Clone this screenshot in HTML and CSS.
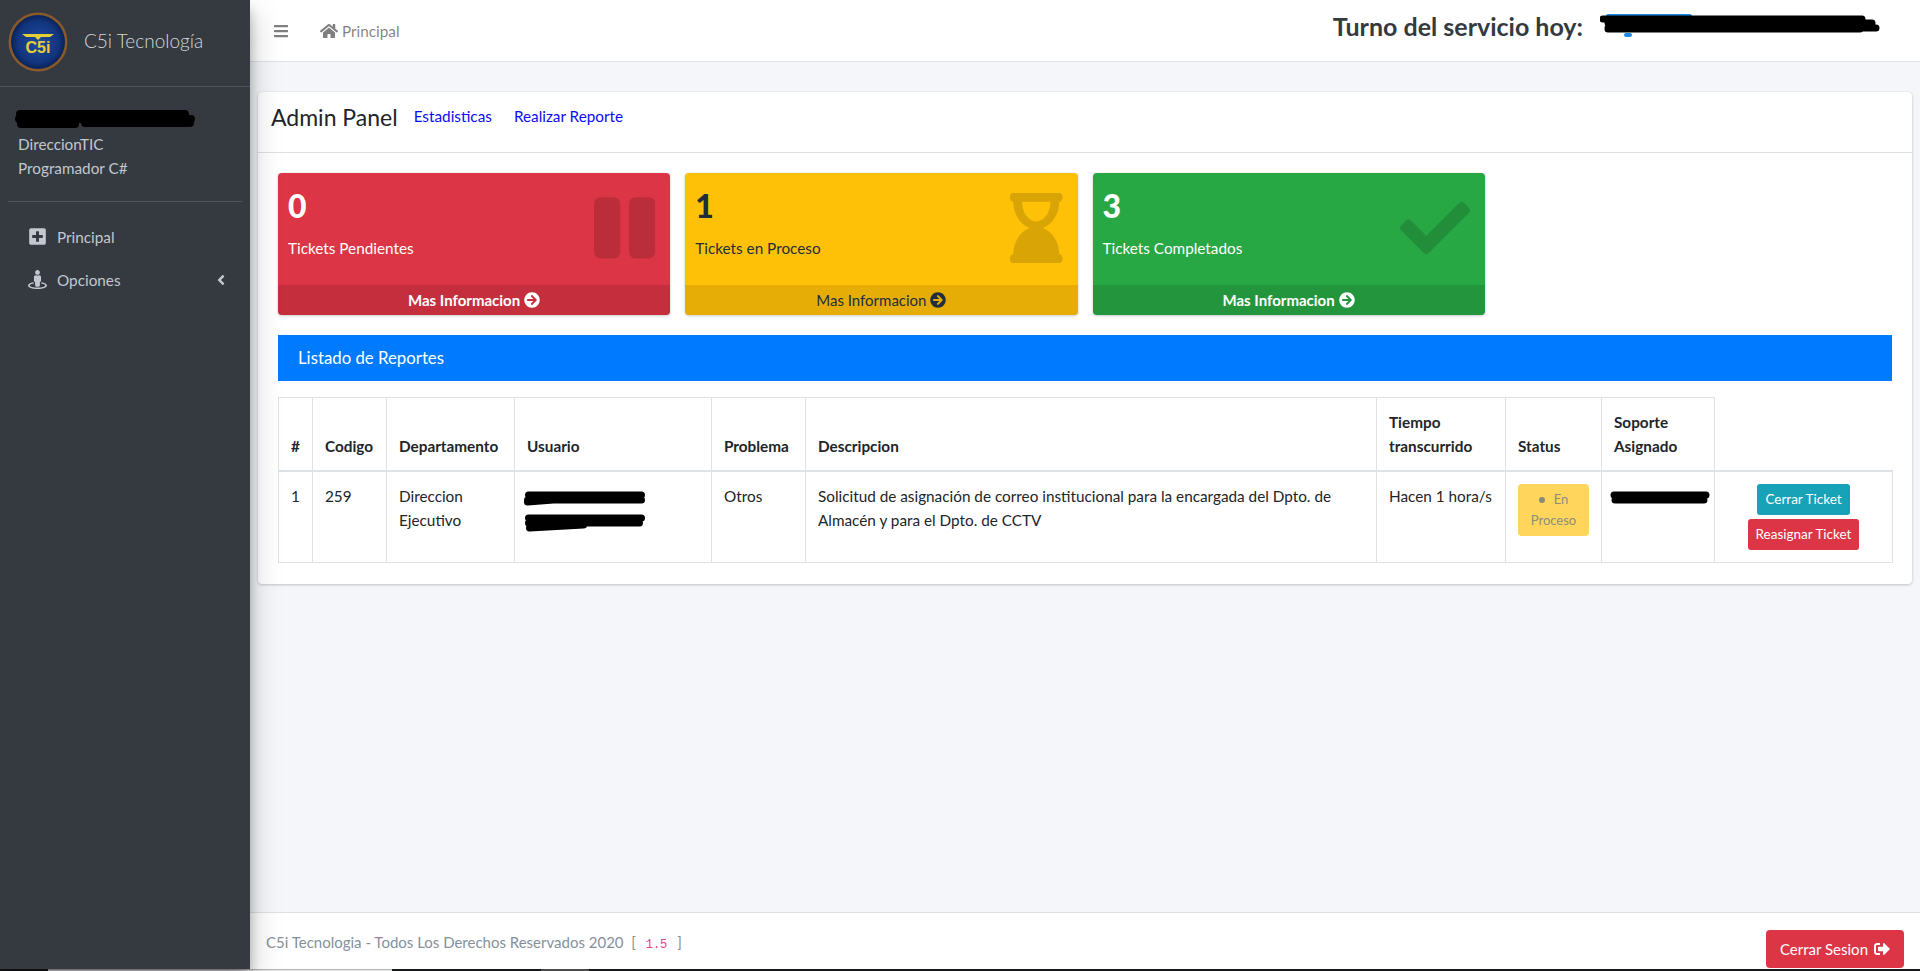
FILE: index.html
```html
<!DOCTYPE html>
<html lang="es">

<head>
    <meta charset="utf-8">
    <title>C5i Tecnologia</title>
    <link rel="stylesheet" href="styles.css">
</head>

<body>
    <div class="wrapper">
        <!-- Sidebar -->
        <aside class="sidebar">
            <div class="brand">
                <svg class="brand-logo" viewBox="0 0 60 60">
                    <defs>
                        <radialGradient id="logo-fill">
                            <stop offset="0" stop-color="#1f4a9c" />
                            <stop offset="0.75" stop-color="#123680" />
                            <stop offset="1" stop-color="#0a2357" />
                        </radialGradient>
                    </defs>
                    <circle cx="30" cy="30" r="29.5" fill="#8a5a2a" />
                    <circle cx="30" cy="30" r="27" fill="url(#logo-fill)" />
                    <path d="M14 22h32l-4 3H33l-3 3-3-3H18z" fill="#e6cf35" />
                    <text x="30" y="41" text-anchor="middle" class="brand-logo-text">C5i</text>
                </svg>
                <span class="brand-text">C5i Tecnología</span>
            </div>
            <div class="user-panel">
                <svg class="scribble user-scribble" viewBox="0 0 181 22">
                    <path d="M5 6 H170 M4 11 H176 M6 16 H60 M70 15 H175" />
                </svg>
                <div>DireccionTIC</div>
                <div>Programador C#</div>
            </div>
            <nav class="side-nav">
                <a class="side-link">
                    <svg class="side-icon" viewBox="0 0 448 512"><path d="M400 32H48C21.5 32 0 53.5 0 80v352c0 26.5 21.5 48 48 48h352c26.5 0 48-21.5 48-48V80c0-26.5-21.5-48-48-48zm-32 252c0 6.6-5.4 12-12 12h-92v92c0 6.6-5.4 12-12 12h-56c-6.6 0-12-5.4-12-12v-92H92c-6.6 0-12-5.4-12-12v-56c0-6.6 5.4-12 12-12h92v-92c0-6.6 5.4-12 12-12h56c6.6 0 12 5.4 12 12v92h92c6.6 0 12 5.4 12 12v56z" /></svg>
                    Principal
                </a>
                <a class="side-link">
                    <svg class="side-icon" viewBox="0 0 512 512"><path d="M367.9 329.76c-4.62 5.3-9.78 10.1-15.9 13.65v22.94c66.52 9.34 112 28.05 112 49.65 0 30.93-93.12 56-208 56S48 446.93 48 416c0-21.6 45.48-40.3 112-49.65v-22.94c-6.12-3.55-11.28-8.35-15.9-13.65C58.87 345.34 0 378.05 0 416c0 53.02 114.62 96 256 96s256-42.98 256-96c0-37.95-58.87-70.66-144.1-86.24zM256 128c35.35 0 64-28.65 64-64S291.35 0 256 0s-64 28.65-64 64 28.65 64 64 64zm-64 192v96c0 17.67 14.33 32 32 32h64c17.67 0 32-14.33 32-32v-96c17.67 0 32-14.33 32-32v-96c0-26.51-21.49-48-48-48h-11.8c-11.07 5.03-23.26 8-36.2 8s-25.13-2.97-36.2-8H208c-26.51 0-48 21.49-48 48v96c0 17.67 14.33 32 32 32z" /></svg>
                    Opciones
                    <svg class="side-chevron" viewBox="0 0 256 512"><path d="M31.7 239l136-136c9.4-9.4 24.6-9.4 33.9 0l22.6 22.6c9.4 9.4 9.4 24.6 0 33.9L127.9 256l96.4 96.4c9.4 9.4 9.4 24.6 0 33.9L201.7 409c-9.4 9.4-24.6 9.4-33.9 0l-136-136c-9.5-9.4-9.5-24.6-.1-34z" /></svg>
                </a>
            </nav>
        </aside>

        <div class="main">
            <!-- Top navbar -->
            <header class="navbar">
                <svg class="nav-bars" viewBox="0 0 448 512"><path d="M16 132h416c8.837 0 16-7.163 16-16V76c0-8.837-7.163-16-16-16H16C7.163 60 0 67.163 0 76v40c0 8.837 7.163 16 16 16zm0 160h416c8.837 0 16-7.163 16-16v-40c0-8.837-7.163-16-16-16H16c-8.837 0-16 7.163-16 16v40c0 8.837 7.163 16 16 16zm0 160h416c8.837 0 16-7.163 16-16v-40c0-8.837-7.163-16-16-16H16c-8.837 0-16 7.163-16 16v40c0 8.837 7.163 16 16 16z" /></svg>
                <a class="nav-home">
                    <svg class="nav-home-icon" viewBox="0 0 576 512"><path d="M280.37 148.26L96 300.11V464a16 16 0 0 0 16 16l112.06-.29a16 16 0 0 0 15.92-16V368a16 16 0 0 1 16-16h64a16 16 0 0 1 16 16v95.64a16 16 0 0 0 16 16.05L464 480a16 16 0 0 0 16-16V300L295.67 148.26a12.19 12.19 0 0 0-15.3 0zM571.6 251.47L488 182.56V44.05a12 12 0 0 0-12-12h-56a12 12 0 0 0-12 12v72.61L318.47 43a48 48 0 0 0-61 0L4.34 251.47a12 12 0 0 0-1.6 16.9l25.5 31A12 12 0 0 0 45.15 301l235.22-193.74a12.19 12.19 0 0 1 15.3 0L530.9 301a12 12 0 0 0 16.9-1.6l25.5-31a12 12 0 0 0-1.7-16.93z" /></svg>
                    Principal
                </a>
                <div class="duty">
                    <span class="duty-label">Turno del servicio hoy:</span>
                    <span class="duty-name">
                        <svg class="scribble" viewBox="0 0 280 24">
                            <path class="name-peek" d="M8 2 H90 M26 21 H30" />
                            <path d="M3 5 H262 M8 9 H272 M8 14 H276 M8 15 H260" />
                        </svg>
                    </span>
                </div>
            </header>

            <!-- Content -->
            <main class="content">
                <section class="card">
                    <div class="card-header">
                        <h1 class="card-title">Admin Panel</h1>
                        <a class="card-link">Estadisticas</a>
                        <a class="card-link">Realizar Reporte</a>
                    </div>
                    <div class="card-body">
                        <div class="boxes">
                            <div class="small-box box-red">
                                <div class="box-inner">
                                    <h3>0</h3>
                                    <p>Tickets Pendientes</p>
                                </div>
                                <svg class="box-icon" viewBox="0 0 448 512"><path d="M144 479H48c-26.5 0-48-21.5-48-48V79c0-26.5 21.5-48 48-48h96c26.5 0 48 21.5 48 48v352c0 26.5-21.5 48-48 48zm304-48V79c0-26.5-21.5-48-48-48h-96c-26.5 0-48 21.5-48 48v352c0 26.5 21.5 48 48 48h96c26.5 0 48-21.5 48-48z" /></svg>
                                <a class="box-footer">Mas Informacion
                                    <svg class="arrow-icon" viewBox="0 0 512 512"><path d="M256 8c137 0 248 111 248 248S393 504 256 504 8 393 8 256 119 8 256 8zm-28.9 143.6l75.5 72.4H120c-13.3 0-24 10.7-24 24v16c0 13.3 10.7 24 24 24h182.6l-75.5 72.4c-9.7 9.3-9.9 24.8-.4 34.3l11 10.9c9.4 9.4 24.6 9.4 33.9 0L404.3 273c9.4-9.4 9.4-24.6 0-33.9L271.6 106.3c-9.4-9.4-24.6-9.4-33.9 0l-11 10.9c-9.5 9.6-9.3 25.1.4 34.4z" /></svg>
                                </a>
                            </div>
                            <div class="small-box box-yellow">
                                <div class="box-inner">
                                    <h3>1</h3>
                                    <p>Tickets en Proceso</p>
                                </div>
                                <svg class="box-icon" viewBox="0 0 384 512"><path d="M360 64c13.255 0 24-10.745 24-24V24c0-13.255-10.745-24-24-24H24C10.745 0 0 10.745 0 24v16c0 13.255 10.745 24 24 24 0 90.965 51.016 167.734 120.842 192C75.016 280.266 24 357.035 24 448c-13.255 0-24 10.745-24 24v16c0 13.255 10.745 24 24 24h336c13.255 0 24-10.745 24-24v-16c0-13.255-10.745-24-24-24 0-90.965-51.016-167.734-120.842-192C308.984 231.734 360 154.965 360 64zM192 208c-57.787 0-104-66.518-104-144h208c0 77.945-46.51 144-104 144z" /></svg>
                                <a class="box-footer">Mas Informacion
                                    <svg class="arrow-icon" viewBox="0 0 512 512"><path d="M256 8c137 0 248 111 248 248S393 504 256 504 8 393 8 256 119 8 256 8zm-28.9 143.6l75.5 72.4H120c-13.3 0-24 10.7-24 24v16c0 13.3 10.7 24 24 24h182.6l-75.5 72.4c-9.7 9.3-9.9 24.8-.4 34.3l11 10.9c9.4 9.4 24.6 9.4 33.9 0L404.3 273c9.4-9.4 9.4-24.6 0-33.9L271.6 106.3c-9.4-9.4-24.6-9.4-33.9 0l-11 10.9c-9.5 9.6-9.3 25.1.4 34.4z" /></svg>
                                </a>
                            </div>
                            <div class="small-box box-green">
                                <div class="box-inner">
                                    <h3>3</h3>
                                    <p>Tickets Completados</p>
                                </div>
                                <svg class="box-icon" viewBox="0 0 512 512"><path d="M173.898 439.404l-166.4-166.4c-9.997-9.997-9.997-26.206 0-36.204l36.203-36.204c9.997-9.998 26.207-9.998 36.204 0L192 312.69 432.095 72.596c9.997-9.997 26.207-9.997 36.204 0l36.203 36.204c9.997 9.997 9.997 26.206 0 36.204l-294.4 294.401c-9.998 9.997-26.207 9.997-36.204-.001z" /></svg>
                                <a class="box-footer">Mas Informacion
                                    <svg class="arrow-icon" viewBox="0 0 512 512"><path d="M256 8c137 0 248 111 248 248S393 504 256 504 8 393 8 256 119 8 256 8zm-28.9 143.6l75.5 72.4H120c-13.3 0-24 10.7-24 24v16c0 13.3 10.7 24 24 24h182.6l-75.5 72.4c-9.7 9.3-9.9 24.8-.4 34.3l11 10.9c9.4 9.4 24.6 9.4 33.9 0L404.3 273c9.4-9.4 9.4-24.6 0-33.9L271.6 106.3c-9.4-9.4-24.6-9.4-33.9 0l-11 10.9c-9.5 9.6-9.3 25.1.4 34.4z" /></svg>
                                </a>
                            </div>
                        </div>

                        <div class="list-title">Listado de Reportes</div>

                        <table class="reports">
                            <colgroup>
                                <col class="col-num">
                                <col class="col-code">
                                <col class="col-dept">
                                <col class="col-user">
                                <col class="col-problem">
                                <col class="col-desc">
                                <col class="col-time">
                                <col class="col-status">
                                <col class="col-support">
                                <col class="col-actions">
                            </colgroup>
                            <thead>
                                <tr>
                                    <th>#</th>
                                    <th>Codigo</th>
                                    <th>Departamento</th>
                                    <th>Usuario</th>
                                    <th>Problema</th>
                                    <th>Descripcion</th>
                                    <th>Tiempo transcurrido</th>
                                    <th>Status</th>
                                    <th>Soporte Asignado</th>
                                    <th class="th-empty"></th>
                                </tr>
                            </thead>
                            <tbody>
                                <tr>
                                    <td>1</td>
                                    <td>259</td>
                                    <td>Direccion Ejecutivo</td>
                                    <td>
                                        <svg class="scribble cell-scribble" viewBox="0 0 122 42">
                                            <path d="M5 5 H118 M4 10 H118 M4 12 L30 10 M5 28 H118 M5 33 H116 M6 38 L60 35" />
                                        </svg>
                                    </td>
                                    <td>Otros</td>
                                    <td>Solicitud de asignación de correo institucional para la encargada del Dpto. de Almacén y para el Dpto. de CCTV</td>
                                    <td>Hacen 1 hora/s</td>
                                    <td>
                                        <div class="status-badge"><span class="status-dot"></span>En Proceso</div>
                                    </td>
                                    <td>
                                        <svg class="scribble support-scribble" viewBox="0 0 101 14">
                                            <path d="M4 4 H96 M5 9 H94" />
                                        </svg>
                                    </td>
                                    <td class="td-actions">
                                        <button class="btn btn-info">Cerrar Ticket</button>
                                        <button class="btn btn-danger">Reasignar Ticket</button>
                                    </td>
                                </tr>
                            </tbody>
                        </table>
                    </div>
                </section>
            </main>

            <!-- Footer -->
            <footer class="footer">
                <span class="footer-text">C5i Tecnologia - Todos Los Derechos Reservados 2020 &nbsp;[ <code>1.5</code> ]</span>
                <button class="btn-logout">Cerrar Sesion
                    <svg class="logout-icon" viewBox="0 0 512 512"><path d="M497 273L329 441c-15 15-41 4.5-41-17v-96H152c-13.3 0-24-10.7-24-24v-96c0-13.3 10.7-24 24-24h136V88c0-21.4 25.9-32 41-17l168 168c9.3 9.4 9.3 24.6 0 34zM192 436v-40c0-6.6-5.4-12-12-12H96c-17.7 0-32-14.3-32-32V160c0-17.7 14.3-32 32-32h84c6.6 0 12-5.4 12-12V76c0-6.6-5.4-12-12-12H96c-53 0-96 43-96 96v192c0 53 43 96 96 96h84c6.6 0 12-5.4 12-12z" /></svg>
                </button>
            </footer>
        </div>
    </div>

    <!-- Sliver of the window behind, along the bottom edge -->
    <div class="screen-edge">
        <span class="edge-light"></span>
        <span class="edge-grey"></span>
    </div>
</body>

</html>
```

FILE: styles.css
```css
/* Reset */
* {
    margin: 0;
    padding: 0;
    box-sizing: border-box;
}

html,
body {
    height: 100%;
    overflow: hidden;
}

body {
    font-family: 'Lato', 'Noto Sans', sans-serif;
    font-size: 15.3px;
    line-height: 24px;
    color: #212529;
    background-color: #f4f6f9;
    display: flex;
    flex-direction: column;
}

.wrapper {
    flex: 1;
    min-height: 0;
    display: flex;
}

.screen-edge {
    height: 2px;
    flex: none;
    display: flex;
    padding-left: 48px;
    background-color: #16181a;
}

.edge-light {
    width: 344px;
    background-color: #e8e8e8;
    border-top: 1px solid #b5b5b5;
}

.edge-grey {
    width: 48px;
    margin-left: 149px;
    background-color: #4a4a4a;
}

svg {
    fill: currentColor;
    flex: none;
}

/* Redaction marks */
.scribble {
    display: block;
    fill: none;
    stroke: #000;
    stroke-width: 7;
    stroke-linecap: round;
    stroke-linejoin: round;
}

/* Sidebar */
.sidebar {
    width: 250px;
    flex: none;
    background-color: #343a40;
    color: #c2c7d0;
    box-shadow: 0 14px 28px rgba(0, 0, 0, 0.25), 0 10px 10px rgba(0, 0, 0, 0.22);
    position: relative;
    z-index: 2;
}

.brand {
    height: 87px;
    display: flex;
    align-items: center;
    padding: 0 0 3px 8px;
    border-bottom: 1px solid #4b545c;
}

.brand-logo {
    width: 60px;
    height: 60px;
}

.brand-logo-text {
    font-family: 'Liberation Sans', sans-serif;
    font-size: 16px;
    font-weight: 700;
    fill: #e6cf35;
}

.brand-text {
    margin-left: 16px;
    font-size: 19px;
    font-weight: 300;
    margin-bottom: 2px;
    color: rgba(255, 255, 255, 0.8);
}

.user-panel {
    margin: 0 8px;
    padding: 21px 10px;
    height: 115px;
    border-bottom: 1px solid #4f5962;
}

.user-scribble {
    width: 181px;
    height: 22px;
    margin: 0 0 2px -3px;
    stroke-width: 8;
}

.side-nav {
    padding-top: 13px;
}

.side-link {
    height: 43px;
    display: flex;
    align-items: center;
    padding: 0 24px 0 28px;
}

.side-icon {
    width: 19px;
    height: 19px;
    margin-right: 10px;
}

.side-chevron {
    width: 10px;
    height: 16px;
    margin-left: auto;
}

/* Navbar */
.main {
    flex: 1;
    min-width: 0;
    display: flex;
    flex-direction: column;
}

.navbar {
    height: 62px;
    flex: none;
    display: flex;
    align-items: center;
    padding: 0 40px 0 24px;
    background-color: #fff;
    border-bottom: 1px solid #dee2e6;
}

.nav-bars {
    width: 14px;
    height: 16px;
    color: rgba(0, 0, 0, 0.5);
}

.nav-home {
    display: flex;
    align-items: center;
    margin-left: 32px;
    color: rgba(0, 0, 0, 0.5);
}

.nav-home-icon {
    width: 18px;
    height: 16px;
    margin-right: 4px;
}

.duty {
    margin-left: auto;
    margin-bottom: 9px;
    display: flex;
    align-items: center;
}

.duty-label {
    font-size: 25px;
    font-weight: 700;
    color: #343a40;
}

.duty-name {
    margin-left: 17px;
}

.duty-name .scribble {
    width: 280px;
    height: 24px;
}

.name-peek {
    stroke: #1e88e5;
    stroke-width: 4;
}

/* Content card */
.content {
    flex: 1;
    min-height: 0;
    padding: 30px 8px 0;
}

.card {
    background-color: #fff;
    border-radius: 4px;
    box-shadow: 0 0 1px rgba(0, 0, 0, 0.125), 0 1px 3px rgba(0, 0, 0, 0.2);
}

.card-header {
    height: 61px;
    display: flex;
    align-items: flex-start;
    padding: 12px 13px;
    border-bottom: 1px solid rgba(0, 0, 0, 0.125);
}

.card-title {
    font-size: 23px;
    font-weight: 400;
    line-height: 26px;
}

.card-link {
    color: #0b0bf5;
    margin-left: 16px;
    line-height: 24px;
}

.card-link + .card-link {
    margin-left: 22px;
}

.card-body {
    padding: 20px 20px 21px;
}

/* Summary boxes */
.boxes {
    display: grid;
    grid-template-columns: repeat(4, 1fr);
    gap: 15px;
}

.small-box {
    position: relative;
    height: 142px;
    border-radius: 4px;
    overflow: hidden;
    box-shadow: 0 0 1px rgba(0, 0, 0, 0.125), 0 1px 3px rgba(0, 0, 0, 0.2);
    display: flex;
    flex-direction: column;
}

.box-red {
    background-color: #dc3545;
    color: #fff;
}

.box-yellow {
    background-color: #ffc107;
    color: #1f2d3d;
}

.box-green {
    background-color: #28a745;
    color: #fff;
}

.box-inner {
    flex: 1;
    padding: 10px;
}

.box-inner h3 {
    font-size: 32px;
    font-weight: 900;
    line-height: 46px;
    margin-bottom: 7px;
}

.box-icon {
    position: absolute;
    top: 20px;
    right: 15px;
    height: 70px;
    color: rgba(0, 0, 0, 0.15);
}

.box-footer {
    height: 30px;
    flex: none;
    display: flex;
    align-items: center;
    justify-content: center;
    gap: 4px;
    background-color: rgba(0, 0, 0, 0.1);
    font-size: 15px;
    font-weight: 700;
}

.box-yellow .box-footer {
    font-weight: 400;
}

.arrow-icon {
    width: 16px;
    height: 16px;
}

/* Reports table */
.list-title {
    margin-top: 20px;
    height: 46px;
    display: flex;
    align-items: center;
    padding-left: 20px;
    background-color: #007bff;
    color: #fff;
    font-size: 16.8px;
}

.reports {
    margin-top: 16px;
    width: 100%;
    table-layout: fixed;
    border-collapse: collapse;
}

.col-num { width: 34px; }
.col-code { width: 74px; }
.col-dept { width: 128px; }
.col-user { width: 197px; }
.col-problem { width: 94px; }
.col-desc { width: 571px; }
.col-time { width: 129px; }
.col-status { width: 96px; }
.col-support { width: 113px; }
.col-actions { width: 178px; }

.reports th,
.reports td {
    border: 1px solid #dee2e6;
    padding: 12px;
    vertical-align: top;
    text-align: left;
}

.reports th {
    vertical-align: bottom;
    font-weight: 700;
    border-bottom-width: 2px;
}

.reports .th-empty {
    border-top: none;
    border-right: none;
}

.cell-scribble {
    width: 123px;
    height: 42px;
    margin: 6px 0 0 -4px;
}

.support-scribble {
    width: 101px;
    height: 14px;
    margin: 7px 0 0 -4px;
}

.status-badge {
    background-color: #ffd65b;
    border-radius: 4px;
    padding: 5px 12px;
    color: #8b8d82;
    font-size: 13px;
    line-height: 21px;
    text-align: center;
}

.status-dot {
    display: inline-block;
    width: 6px;
    height: 6px;
    margin: 0 9px 1px 0;
    border-radius: 50%;
    background-color: #8a8a78;
}

.reports .td-actions {
    text-align: center;
}

.btn {
    display: block;
    margin: 0 auto;
    padding: 4px 8px;
    border: none;
    border-radius: 3px;
    color: #fff;
    font-family: inherit;
    font-size: 13.5px;
    line-height: 23px;
}

.btn + .btn {
    margin-top: 4px;
}

.btn-info {
    background-color: #17a2b8;
}

.btn-danger {
    background-color: #dc3545;
}

/* Footer */
.footer {
    height: 57px;
    flex: none;
    display: flex;
    align-items: center;
    justify-content: space-between;
    padding: 0 16px;
    background-color: #fff;
    border-top: 1px solid #dee2e6;
    color: #869099;
}

.footer-text {
    font-size: 15px;
    margin-top: 5px;
}

.footer-text code {
    font-family: 'Liberation Mono', monospace;
    font-size: 12px;
    color: #e83e8c;
    padding: 0 6px;
}

.btn-logout {
    height: 38px;
    margin-top: 15px;
    padding: 0 14px;
    display: flex;
    align-items: center;
    gap: 6px;
    border: none;
    border-radius: 4px;
    background-color: #dc3545;
    color: #fff;
    font-family: inherit;
    font-size: 15px;
}

.logout-icon {
    width: 16px;
    height: 16px;
}
```
